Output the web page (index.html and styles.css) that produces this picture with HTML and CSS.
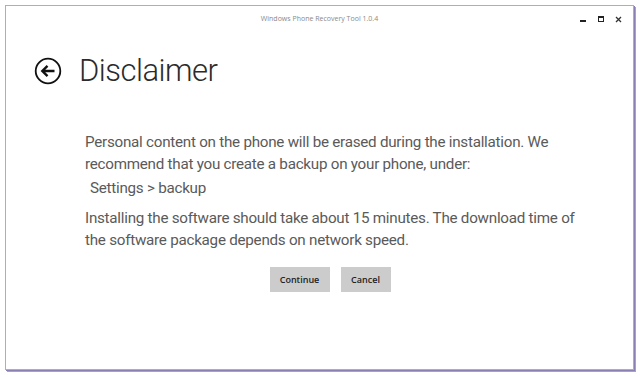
FILE: index.html
```html
<!DOCTYPE html>
<html>
<head>
<meta charset="utf-8">
<link rel="stylesheet" href="styles.css">
</head>
<body>
<div class="window">
  <div class="titlebar">
    <div class="title">Windows Phone Recovery Tool 1.0.4</div>
    <div class="controls">
      <span class="ctl min"></span>
      <span class="ctl max"></span>
      <span class="ctl close">
        <svg width="7" height="7" viewBox="0 0 7 7"><path d="M1 1L6 6M6 1L1 6" stroke="#333" stroke-width="1.3"/></svg>
      </span>
    </div>
  </div>
  <div class="header">
    <svg class="back" width="28" height="28" viewBox="0 0 28 28">
      <circle cx="14" cy="14" r="12.3" fill="none" stroke="#111" stroke-width="1.8"/>
      <path d="M20.5 14H8.5M13.5 8.8L8.3 14L13.5 19.2" fill="none" stroke="#111" stroke-width="2.4"/>
    </svg>
    <h1 class="heading">Disclaimer</h1>
  </div>
  <div class="content">
    <p class="para">Personal content on the phone will be erased during the installation. We recommend that you create a backup on your phone, under:</p>
    <p class="path">Settings &gt; backup</p>
    <p class="para">Installing the software should take about 15 minutes. The download time of the software package depends on network speed.</p>
    <div class="buttons">
      <button class="btn btn-continue">Continue</button>
      <button class="btn btn-cancel">Cancel</button>
    </div>
  </div>
</div>
</body>
</html>
```
FILE: styles.css
```css
html, body {
  margin: 0;
  padding: 0;
  background: #ffffff;
}
body {
  width: 640px;
  height: 377px;
  overflow: hidden;
  font-family: "Roboto", "Open Sans", sans-serif;
}
.window {
  margin: 5px 0 0 5px;
  width: 627px;
  height: 363px;
  border: 1px solid #b3a8cc;
  box-shadow: 1px 1px 0 #8c7fb4, 2px 2px 0 #a99fc8;
  background: #fff;
  box-sizing: content-box;
}
.titlebar {
  display: grid;
  grid-template-columns: 1fr auto 1fr;
  align-items: center;
  height: 24px;
}
.title {
  grid-column: 2;
  font-family: "Open Sans", sans-serif;
  font-size: 7px;
  color: #8a8a8a;
  padding-top: 1px;
}
.controls {
  grid-column: 3;
  justify-self: end;
  display: flex;
  align-items: center;
  gap: 11px;
  padding-right: 11px;
  padding-top: 2px;
}
.ctl {
  width: 7px;
  height: 7px;
  display: flex;
  align-items: center;
  justify-content: center;
}
.min::before {
  content: "";
  width: 6px;
  height: 2px;
  background: #222;
  margin-top: 3px;
}
.max::before {
  content: "";
  width: 4px;
  height: 3px;
  border: 1px solid #222;
  border-top-width: 2px;
}
.header {
  display: flex;
  align-items: center;
  padding: 23px 0 0 28px;
  gap: 17px;
}
.back {
  display: block;
}
.heading {
  margin: 0;
  font-size: 31px;
  font-weight: 300;
  color: #2b2b2b;
  line-height: 36px;
  letter-spacing: -0.5px;
}
.content {
  padding: 42px 0 0 79px;
  width: 500px;
}
.para {
  margin: 0;
  font-size: 15.2px;
  line-height: 22px;
  color: #5a5a5a;
  font-weight: 400;
  letter-spacing: -0.25px;
}
.path {
  margin: 2px 0 8px 5px;
  font-size: 15.2px;
  line-height: 22px;
  color: #5a5a5a;
  letter-spacing: -0.25px;
}
.buttons {
  display: flex;
  justify-content: center;
  gap: 11px;
  margin-top: 16px;
  padding-right: 10px;
}
.btn {
  border: none;
  background: #cccccc;
  font-family: "Open Sans", "Noto Sans", sans-serif;
  font-size: 9px;
  font-weight: 600;
  color: #222;
  height: 25px;
  padding: 0;
}
.btn-continue { width: 60px; }
.btn-cancel { width: 50px; }
```
